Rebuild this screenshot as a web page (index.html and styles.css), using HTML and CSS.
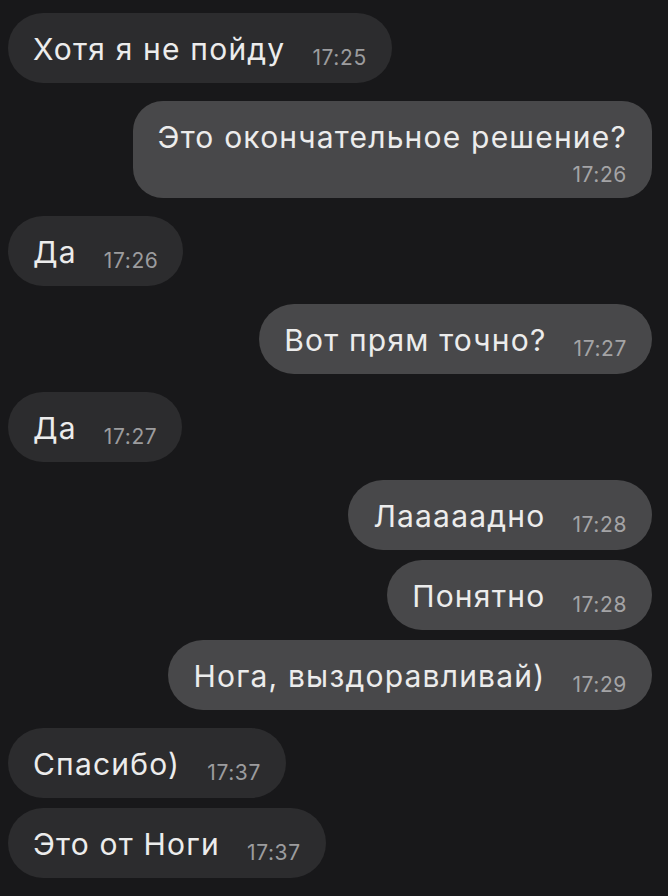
FILE: index.html
```html
<!DOCTYPE html>
<html lang="ru">
<head>
  <meta charset="UTF-8">
  <meta name="viewport" content="width=device-width, initial-scale=1.0">
  <title>Чат</title>
  <link rel="stylesheet" href="styles.css">
</head>

<body>
  <div class="chat">
    <div class="msg in">
      <span class="text">Хотя я не пойду</span><span class="time">17:25</span>
    </div>

    <div class="msg out stacked">
      <span class="text">Это окончательное решение?</span><span class="time">17:26</span>
    </div>

    <div class="msg in">
      <span class="text">Да</span><span class="time">17:26</span>
    </div>

    <div class="msg out">
      <span class="text">Вот прям точно?</span><span class="time">17:27</span>
    </div>

    <div class="msg in">
      <span class="text">Да</span><span class="time">17:27</span>
    </div>

    <div class="msg out">
      <span class="text">Лааааадно</span><span class="time">17:28</span>
    </div>
    <div class="msg out same">
      <span class="text">Понятно</span><span class="time">17:28</span>
    </div>
    <div class="msg out same">
      <span class="text">Нога, выздоравливай)</span><span class="time">17:29</span>
    </div>

    <div class="msg in">
      <span class="text">Спасибо)</span><span class="time">17:37</span>
    </div>
    <div class="msg in same">
      <span class="text">Это от Ноги</span><span class="time">17:37</span>
    </div>
  </div>
</body>
</html>
```

FILE: styles.css
```css
body {
  margin: 0;
  background-color: #18181a;
  font-family: Inter, "Liberation Sans", sans-serif;
  color: #ececec;
}

.chat {
  display: flex;
  flex-direction: column;
  padding: 13px 16px 0 8px;
}

.msg {
  box-sizing: border-box;
  height: 70px;
  padding: 18px 25px 0;
  border-radius: 35px;
  margin-top: 18px;
  white-space: nowrap;
}

.msg:first-child {
  margin-top: 0;
}

.msg.same {
  margin-top: 10px;
}

.in {
  align-self: flex-start;
  background-color: #2c2c2e;
}

.out {
  align-self: flex-end;
  background-color: #48484a;
}

.text {
  font-size: 30px;
  line-height: 36px;
  letter-spacing: 1.2px;
}

.time {
  margin-left: 27px;
  font-size: 21px;
  line-height: 20px;
  letter-spacing: 0.6px;
  vertical-align: -5px;
  color: #9c9c9e;
}

.out .time {
  color: #a4a4a6;
}

.stacked {
  height: 97px;
  border-radius: 30px;
}

.stacked .text {
  display: block;
}

.stacked .time {
  display: block;
  margin: 8px 0 0;
  line-height: 24px;
  text-align: right;
  vertical-align: baseline;
}
```
